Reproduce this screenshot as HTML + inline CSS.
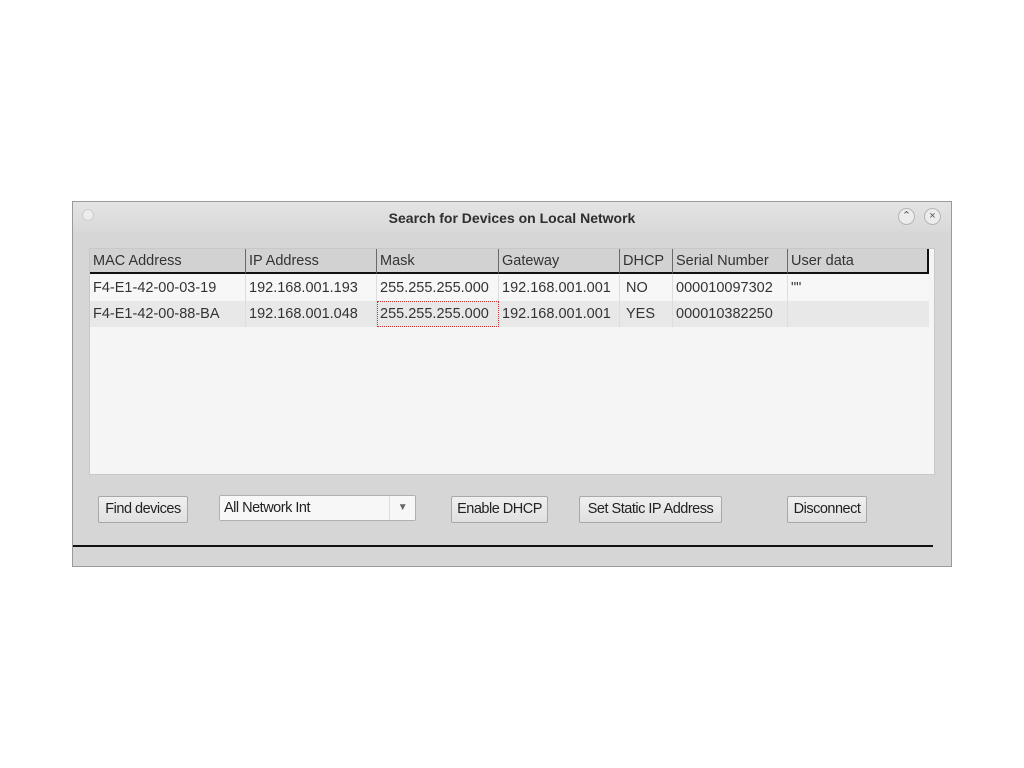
<!DOCTYPE html>
<html><head><style>
*{margin:0;padding:0;box-sizing:border-box}
body{width:1024px;height:768px;background:#fff;position:relative;font-family:"Liberation Sans",sans-serif;font-size:14.5px;color:#333;overflow:hidden}
.win{position:absolute;left:72px;top:201px;width:880px;height:366px;background:#d6d6d6;border:1px solid #9a9a9a}
.tb{position:absolute;left:0;top:0;width:878px;height:31px;background:linear-gradient(#e4e4e4,#d8d8d8)}
.title{position:absolute;left:0;width:878px;top:8px;text-align:center;font-weight:bold;font-size:14px;color:#2e2e2e}
.circ{position:absolute;width:17px;height:17px;border-radius:50%;border:1px solid #b5b5b5;background:#ececec;font-size:11px;text-align:center;line-height:15px;color:#555}
.tbl{position:absolute;left:16px;top:46px;width:846px;height:227px;background:#f5f5f5;border:1px solid #c8c8c8}
.c{position:absolute;height:26px;line-height:26px;padding-left:3px;white-space:nowrap;overflow:hidden}
.h{background:#d2d2d2;border-right:1px solid #6a6a6a;border-bottom:2px solid #111;height:25px;line-height:25px}
.r2{background:#e8e8e8}
.btn{position:absolute;height:27px;border:1px solid #a8a8a8;border-radius:2px;background:linear-gradient(#f0f0f0,#e0e0e0);text-align:center;line-height:25px;font-size:14.5px;letter-spacing:-0.5px;color:#222}
</style></head><body>
<div class="win">
 <div class="tb">
  <div class="circ" style="left:9px;top:7px;width:12px;height:12px;border-color:#ccc"></div>
  <div class="title">Search for Devices on Local Network</div>
  <div class="circ" style="left:825px;top:6px">&#8963;</div>
  <div class="circ" style="left:851px;top:6px">×</div>
 </div>
 <div class="tbl">
  <div class="c h" style="left:0;top:0;width:156px">MAC Address</div>
  <div class="c h" style="left:156px;top:0;width:131px">IP Address</div>
  <div class="c h" style="left:287px;top:0;width:122px">Mask</div>
  <div class="c h" style="left:409px;top:0;width:121px">Gateway</div>
  <div class="c h" style="left:530px;top:0;width:53px">DHCP</div>
  <div class="c h" style="left:583px;top:0;width:115px">Serial Number</div>
  <div class="c h" style="left:698px;top:0;width:141px;border-right:2px solid #111">User data</div>

  <div class="c" style="left:0;top:26px;width:839px;background:#f7f7f7;padding:0"></div>
  <div class="c" style="left:0;top:26px;width:156px;border-right:1px solid #ddd">F4-E1-42-00-03-19</div>
  <div class="c" style="left:156px;top:26px;width:131px;border-right:1px solid #ddd">192.168.001.193</div>
  <div class="c" style="left:287px;top:26px;width:122px;border-right:1px solid #ddd">255.255.255.000</div>
  <div class="c" style="left:409px;top:26px;width:121px;border-right:1px solid #ddd">192.168.001.001</div>
  <div class="c" style="left:530px;top:26px;width:53px;border-right:1px solid #ddd;padding-left:6px">NO</div>
  <div class="c" style="left:583px;top:26px;width:115px;border-right:1px solid #ddd">000010097302</div>
  <div class="c" style="left:698px;top:26px;width:141px">""</div>

  <div class="c r2" style="left:0;top:52px;width:839px;padding:0"></div>
  <div class="c" style="left:0;top:52px;width:156px;border-right:1px solid #ddd">F4-E1-42-00-88-BA</div>
  <div class="c" style="left:156px;top:52px;width:131px;border-right:1px solid #ddd">192.168.001.048</div>
  <div class="c" style="left:287px;top:52px;width:122px;border:1px dotted #c33;line-height:24px;padding-left:2px">255.255.255.000</div>
  <div class="c" style="left:409px;top:52px;width:121px;border-right:1px solid #ddd">192.168.001.001</div>
  <div class="c" style="left:530px;top:52px;width:53px;border-right:1px solid #ddd;padding-left:6px">YES</div>
  <div class="c" style="left:583px;top:52px;width:115px;border-right:1px solid #ddd">000010382250</div>
 </div>
 <div class="btn" style="left:25px;top:294px;width:90px">Find devices</div>
 <div style="position:absolute;left:146px;top:293px;width:197px;height:26px;background:#f7f7f7;border:1px solid #b0b0b0;border-radius:2px;line-height:24px;padding-left:4px;letter-spacing:-0.5px;color:#222">All Network Int<span style="position:absolute;right:0;top:0;width:26px;height:24px;border-left:1px solid #ddd;text-align:center;font-size:10px;color:#666">▼</span></div>
 <div class="btn" style="left:378px;top:294px;width:97px">Enable DHCP</div>
 <div class="btn" style="left:506px;top:294px;width:143px">Set Static IP Address</div>
 <div class="btn" style="left:714px;top:294px;width:80px">Disconnect</div>
 <div style="position:absolute;left:0;top:343px;width:860px;height:2px;background:#111"></div>
</div>
</body></html>
